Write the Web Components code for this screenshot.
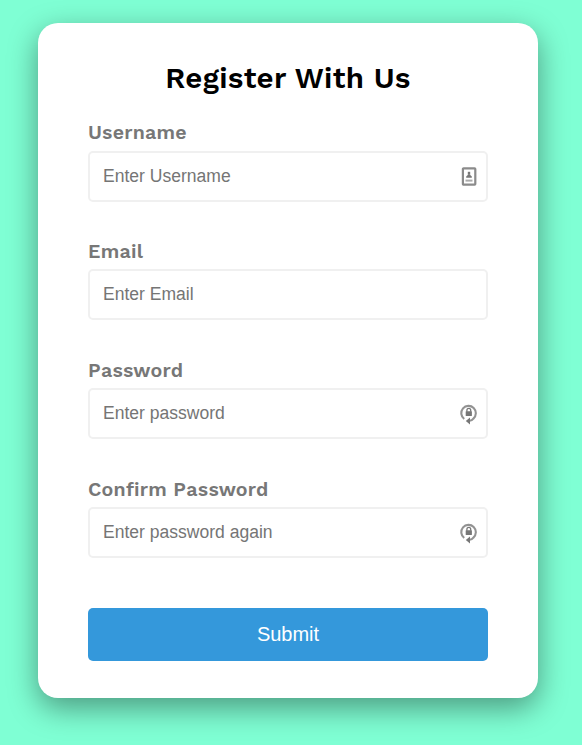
<!DOCTYPE html>
<html lang="en"><head><meta charset="utf-8"><title>Register</title>
<style>
html,body{margin:0;height:745px;overflow:hidden}
body{background:#7fffd4;font-family:"Work Sans",Inter,"Open Sans",sans-serif}
</style></head><body>
<register-card heading="Register With Us">
<form-field label="Username" hint="Enter Username" style="--label-height:30px"><contact-icon></contact-icon></form-field>
<form-field label="Email" hint="Enter Email"></form-field>
<form-field label="Password" hint="Enter password"><lock-icon></lock-icon></form-field>
<form-field label="Confirm Password" hint="Enter password again"><lock-icon></lock-icon></form-field>
<submit-button slot="action">Submit</submit-button>
</register-card>
<script>
class RegisterCard extends HTMLElement{connectedCallback(){this.attachShadow({mode:'open'}).innerHTML=`<style>
:host{display:flow-root;box-sizing:border-box;width:500px;height:675px;margin:23px 0 0 38px;padding:37px 50px 0;background:#fff;border-radius:20px;box-shadow:0 10px 30px rgba(0,0,0,.4)}
h2{margin:0 0 25px;height:36px;line-height:36px;text-align:center;font-size:29.5px;font-weight:600;letter-spacing:.26px;color:#000;white-space:nowrap}
.fields{display:grid;gap:39px}.action{margin-top:50px}</style><h2></h2><div class="fields"><slot></slot></div><div class="action"><slot name="action"></slot></div>`;
this.shadowRoot.querySelector('h2').textContent=this.getAttribute('heading')}}
class FormField extends HTMLElement{connectedCallback(){this.attachShadow({mode:'open'}).innerHTML=`<style>
:host{display:block;height:80px}
label{display:block;height:var(--label-height,29px);line-height:24px;font-size:19.6px;font-weight:600;letter-spacing:.24px;color:#777;white-space:nowrap}
.box{box-sizing:border-box;height:51px;border:2px solid #f0f0f0;border-radius:5px;display:flex;align-items:center;justify-content:space-between;padding:0 9px 0 13px;font:17.55px "Liberation Sans",Arial,sans-serif;color:#757575}
</style><label></label><div class="box"><span></span><slot></slot></div>`;
this.shadowRoot.querySelector('label').textContent=this.getAttribute('label');this.shadowRoot.querySelector('span').textContent=this.getAttribute('hint')}}
class ContactIcon extends HTMLElement{connectedCallback(){this.attachShadow({mode:'open'}).innerHTML=`<style>:host{display:block;width:16px;height:20px}svg{display:block}</style><svg width="16" height="20"><rect x="1.9" y="1.3" width="12.4" height="16.4" rx=".7" fill="none" stroke="#8b8b8b" stroke-width="2.2"/><rect x="6.8" y="4.8" width="2.4" height="3" fill="#777"/><path d="M5.2 10.8V9.6L7 7.8H9L10.8 9.6V10.8Z" fill="#777"/><path d="M4.5 13.6h7" stroke="#aaa" stroke-width="2"/></svg>`}}
class LockIcon extends HTMLElement{connectedCallback(){this.attachShadow({mode:'open'}).innerHTML=`<style>:host{display:block;width:17px;height:22px}svg{display:block;overflow:visible}</style><svg width="17" height="22" fill="none"><path d="M4.2 16A7.3 7.3 0 1 1 13.4 15.6Q12 17.6 9.7 17.8" stroke="#929292" stroke-width="2.1"/><path d="M10 14.5V21.4L5.8 17.9Z" fill="#777"/><path d="M6.9 8.8V7.2a1.9 1.9 0 0 1 3.8 0V8.8" stroke="#777" stroke-width="1.3"/><rect x="5.7" y="8.2" width="6.2" height="4.8" rx=".5" fill="#777"/></svg>`}}
class SubmitButton extends HTMLElement{connectedCallback(){this.attachShadow({mode:'open'}).innerHTML=`<style>:host{display:block}button{display:block;width:100%;height:53px;border:0;border-radius:5px;background:#3498db;color:#fff;font:20px "Liberation Sans",Arial,sans-serif}</style><button><slot></slot></button>`}}
customElements.define('contact-icon',ContactIcon);customElements.define('lock-icon',LockIcon);customElements.define('submit-button',SubmitButton);customElements.define('form-field',FormField);customElements.define('register-card',RegisterCard);
</script></body></html>
